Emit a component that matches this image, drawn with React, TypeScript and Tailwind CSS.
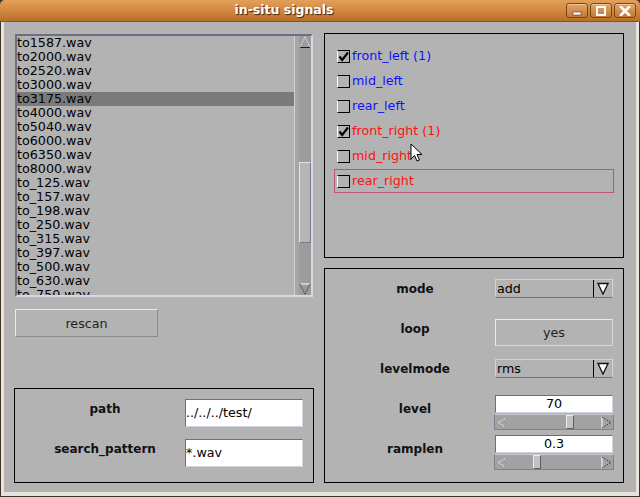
import React from "react"

const files = [
  "to1587.wav", "to2000.wav", "to2520.wav", "to3000.wav", "to3175.wav",
  "to4000.wav", "to5040.wav", "to6000.wav", "to6350.wav", "to8000.wav",
  "to_125.wav", "to_157.wav", "to_198.wav", "to_250.wav", "to_315.wav",
  "to_397.wav", "to_500.wav", "to_630.wav", "to_750.wav",
]

const channels = [
  { name: "front_left (1)", checked: true, cls: "text-[#1010ff]" },
  { name: "mid_left", checked: false, cls: "text-[#1010ff]" },
  { name: "rear_left", checked: false, cls: "text-[#1010ff]" },
  { name: "front_right (1)", checked: true, cls: "text-[#ff1010]" },
  { name: "mid_right", checked: false, cls: "text-[#ff1010]" },
  { name: "rear_right", checked: false, cls: "text-[#ff1010]", focused: true },
]

function TitleButton({ kind }: { kind: "min" | "max" | "close" }) {
  return (
    <div className="w-[22px] h-[15px] rounded-[3px] border border-[#7a4616] bg-gradient-to-b from-[#e4a466] to-[#c27a34] shadow-[inset_0_1px_0_#f2c89a] flex items-center justify-center">
      <svg width="12" height="10" viewBox="0 0 12 10">
        {kind === "min" && <rect x="2" y="6" width="8" height="3" fill="#fff" stroke="#6a3a10" strokeWidth="0.6" />}
        {kind === "max" && <rect x="2" y="1" width="8" height="8" fill="none" stroke="#fff" strokeWidth="2" />}
        {kind === "close" && (
          <path d="M2 1 L10 9 M10 1 L2 9" stroke="#fff" strokeWidth="2.6" strokeLinecap="square" />
        )}
      </svg>
    </div>
  )
}

function ScrollArrow({ up }: { up?: boolean }) {
  return (
    <div className="h-[12px] w-[12px] flex items-center justify-center">
      <svg width="12" height="12" viewBox="0 0 12 12">
        {up ? (
          <>
            <path d="M6 1 L1 11 M6 1 L11 11" stroke="#fff" strokeWidth="1" strokeDasharray="1 1" fill="none" />
            <path d="M1 11.5 H11" stroke="#222" strokeWidth="1" />
          </>
        ) : (
          <>
            <path d="M1 1 H11" stroke="#fff" strokeWidth="1" />
            <path d="M1 1 L6 11 M11 1 L6 11" stroke="#222" strokeWidth="1" strokeDasharray="1 1" fill="none" />
          </>
        )}
      </svg>
    </div>
  )
}

function FileList() {
  return (
    <div className="ml-[1px] mt-[1px] w-[298px] h-[263px] border-t-2 border-l-2 border-t-[#6c6f80] border-l-[#6c6f80] border-b-2 border-r-2 border-b-[#d6d8e4] border-r-[#d6d8e4] flex overflow-hidden">
      <div className="flex-1 overflow-hidden">
        {files.map((f) => (
          <div
            key={f}
            className={`h-[14px] leading-[14px] text-[12.7px] text-black whitespace-nowrap ${f === "to3175.wav" ? "bg-[#7a7a7a]" : ""}`}
          >
            {f}
          </div>
        ))}
      </div>
      {/* scrollbar */}
      <div className="w-[17px] flex h-full">
        <div className="w-[1px] bg-[#d2d2d6]" />
        <div className="w-[4px] bg-[#a6a6a6]" />
        <div className="w-[12px] bg-[#9c9c9c] flex flex-col">
          <ScrollArrow up />
          <div className="mt-[114px] h-[81px] bg-[#b6b6b6] border-t border-l border-[#e4e4ea] border-b border-r border-b-[#7c7c84] border-r-[#7c7c84]" />
          <div className="flex-1" />
          <ScrollArrow />
        </div>
      </div>
    </div>
  )
}

function Checkbox({ checked }: { checked: boolean }) {
  return (
    <div className="w-[13px] h-[13px] border-t border-r border-b border-black border-l border-l-white bg-[#b3b3b3] flex items-center justify-center">
      {checked && (
        <svg width="11" height="11" viewBox="0 0 11 11">
          <path d="M1.5 5.5 L4.2 9 L10 1.5" stroke="#000" strokeWidth="2.2" fill="none" />
        </svg>
      )}
    </div>
  )
}

function Dropdown({ value }: { value: string }) {
  return (
    <div className="w-[118px] h-[19px] flex border-t border-l border-r border-[#d0d2e0] border-b border-b-[#6c6f80] bg-[#b3b3b3]">
      <div className="flex-1 pl-[1px] text-[12.7px] leading-[17px] text-black">{value}</div>
      <div className="w-[1px] bg-black" />
      <div className="w-[18px] flex items-center justify-center">
        <svg width="12" height="13" viewBox="0 0 12 13">
          <path d="M1 1.5 H11 L6 12 Z" fill="#fff" stroke="#111" strokeWidth="1.3" />
        </svg>
      </div>
    </div>
  )
}

function TextField({ value, center, h = "h-[18px]" }: { value: string; center?: boolean; h?: string }) {
  return (
    <div
      className={`w-[118px] ${h} bg-white border-t border-l border-[#6c6f84] border-b border-r border-b-[#d2d4e0] border-r-[#d2d4e0] text-[12.7px] text-black flex items-center ${center ? "justify-center" : ""}`}
    >
      {value}
    </div>
  )
}

function Slider({ thumb }: { thumb: number }) {
  return (
    <div className="relative w-[120px] h-[16px] -ml-[1px] mt-[1px] bg-[#a2a2a2] border border-[#7e8090] border-t-[#c8c8d0]">
      <svg className="absolute left-[2px] top-[3px]" width="10" height="9" viewBox="0 0 10 9">
        <path d="M8 0.5 L1 4.5 L8 8.5" stroke="#fff" strokeWidth="1" strokeDasharray="1 1" fill="none" />
      </svg>
      <svg className="absolute right-[1px] top-[1px]" width="11" height="13" viewBox="0 0 11 13">
        <path d="M1 0.5 V12.5" stroke="#fff" strokeWidth="1" />
        <path d="M1 1 L10 6.5 L1 12" stroke="#222" strokeWidth="1" strokeDasharray="1 1" fill="none" />
      </svg>
      <div
        className="absolute top-0 w-[8px] h-[14px] bg-[#c2c2c2] border-t border-l border-[#ececf0] border-b border-r border-b-[#5c5c66] border-r-[#5c5c66]"
        style={{ left: thumb }}
      />
    </div>
  )
}

function Row({ label, mt, children }: { label: string; mt: string; children: React.ReactNode }) {
  return (
    <div className="h-[40px] flex items-start">
      <div className="w-[170px] h-[40px] pl-[10px] flex items-center justify-center text-[12px] font-bold text-[#111]">
        {label}
      </div>
      <div className={mt}>{children}</div>
    </div>
  )
}

export default function App() {
  return (
    <div className="relative w-[640px] h-[497px] flex flex-col bg-[#3e352b] overflow-hidden font-['DejaVu_Sans',sans-serif]">
      {/* Title bar */}
      <div className="h-[22px] flex items-center rounded-t-[5px] bg-gradient-to-b from-[#e3a05c] via-[#d28840] to-[#b86f2a] border-b border-[#8a5420]">
        <div className="flex-1 text-center text-[12.5px] font-bold text-white [text-shadow:1px_1px_1px_#3a2410] pl-[2px]">
          in-situ signals
        </div>
        <div className="flex gap-[2px] pr-[4px]">
          <TitleButton kind="min" />
          <TitleButton kind="max" />
          <TitleButton kind="close" />
        </div>
      </div>

      {/* Window body */}
      <div className="flex-1 mx-px mb-px border-x-[3px] border-b-[4px] border-[#e7e3dc] bg-[#b3b3b3] flex pl-[10px] pt-[11px] gap-[10px]">
        {/* Left column */}
        <div className="w-[300px] flex flex-col">
          <FileList />
          <button className="mt-[12px] ml-[1px] w-[143px] h-[28px] pt-[1px] bg-[#b3b3b3] border-t border-l border-[#ececec] border-b border-r border-b-[#8c8c8c] border-r-[#8c8c8c] text-[12.7px] text-[#222] text-center">
            rescan
          </button>
          <div className="mt-[51px] w-[300px] h-[95px] border border-black">
            <Row label="path" mt="mt-[10px]">
              <TextField value="../../../test/" h="h-[28px]" />
            </Row>
            <Row label="search_pattern" mt="mt-[10px]">
              <TextField value="*.wav" h="h-[28px]" />
            </Row>
          </div>
        </div>

        {/* Right column */}
        <div className="w-[300px] flex flex-col">
          <div className="h-[225px] border border-black pt-[10px] pl-[9px]">
            {channels.map((c) => (
              <div key={c.name} className="h-[25px]">
                <div
                  className={`w-[280px] h-[24px] flex items-center gap-[2px] pl-[2px] border ${c.focused ? "border-[#c4507c]" : "border-transparent"}`}
                >
                  <Checkbox checked={c.checked} />
                  <span className={`text-[12.7px] ${c.cls}`}>{c.name}</span>
                </div>
              </div>
            ))}
          </div>

          <div className="mt-[10px] h-[215px] border border-black">
            <Row label="mode" mt="mt-[10px]">
              <Dropdown value="add" />
            </Row>
            <Row label="loop" mt="mt-[10px]">
              <div className="w-[118px] h-[27px] border-t border-l border-[#ececec] border-b border-r border-b-[#d8d8d8] border-r-[#d8d8d8] flex items-center justify-center text-[12.7px] text-[#222]">
                yes
              </div>
            </Row>
            <Row label="levelmode" mt="mt-[10px]">
              <Dropdown value="rms" />
            </Row>
            <Row label="level" mt="mt-[6px]">
              <TextField value="70" center />
              <Slider thumb={71} />
            </Row>
            <Row label="ramplen" mt="mt-[6px]">
              <TextField value="0.3" center />
              <Slider thumb={38} />
            </Row>
          </div>
        </div>
      </div>

      {/* Mouse pointer */}
      <svg className="absolute left-[410px] top-[143px]" width="14" height="20" viewBox="0 0 14 20">
        <path d="M1 1 L1 16 L4.5 12.5 L7 18 L9.5 17 L7 11.5 L12 11.5 Z" fill="#fff" stroke="#000" strokeWidth="1" strokeLinejoin="round" />
      </svg>
    </div>
  )
}
